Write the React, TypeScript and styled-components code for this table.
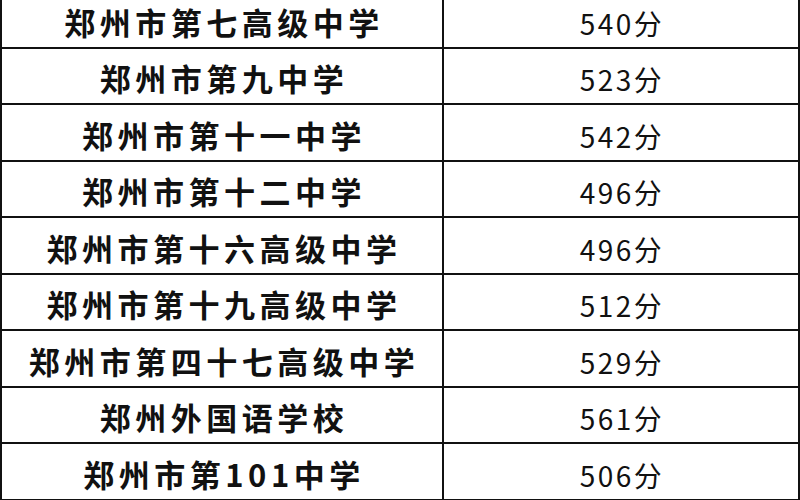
import React from 'react';
import styled, { createGlobalStyle } from 'styled-components';

const GlobalStyle = createGlobalStyle`
  html, body {
    margin: 0;
    padding: 0;
    background: #fff;
    overflow: hidden;
  }
`;

const Table = styled.div`
  width: 800px;
  margin-top: -8px;
  box-sizing: border-box;
  border-left: 2px solid #111;
  border-right: 2px solid #111;
  background: #fff;
`;

const Row = styled.div`
  display: grid;
  grid-template-columns: 442px 1fr;
  height: 56.5px;
  box-sizing: border-box;
  border-bottom: 2px solid #111;
`;

const NameCell = styled.div`
  display: flex;
  align-items: center;
  justify-content: center;
  padding: 4px 0 0 4px;
  border-right: 2px solid #111;
  font-family: 'Noto Sans CJK SC', 'Noto Sans CJK JP', sans-serif;
  font-weight: 700;
  font-size: 31px;
  letter-spacing: 4.5px;
  color: #111;
  white-space: nowrap;
`;

const ScoreCell = styled.div`
  display: flex;
  align-items: center;
  justify-content: center;
  padding: 7px 0 0 2px;
  font-family: 'Noto Sans CJK SC', 'Noto Sans CJK JP', sans-serif;
  font-weight: 400;
  font-size: 28px;
  letter-spacing: 2.5px;
  color: #111;
  white-space: nowrap;
`;

const schools = [
  { name: '郑州市第七高级中学', score: 540 },
  { name: '郑州市第九中学', score: 523 },
  { name: '郑州市第十一中学', score: 542 },
  { name: '郑州市第十二中学', score: 496 },
  { name: '郑州市第十六高级中学', score: 496 },
  { name: '郑州市第十九高级中学', score: 512 },
  { name: '郑州市第四十七高级中学', score: 529 },
  { name: '郑州外国语学校', score: 561 },
  { name: '郑州市第101中学', score: 506 },
];

const App = () => {
  return (
    <>
      <GlobalStyle />
      <Table>
        {schools.map((s) => (
          <Row key={s.name}>
            <NameCell>{s.name}</NameCell>
            <ScoreCell>{s.score}分</ScoreCell>
          </Row>
        ))}
      </Table>
    </>
  );
};

export default App;
